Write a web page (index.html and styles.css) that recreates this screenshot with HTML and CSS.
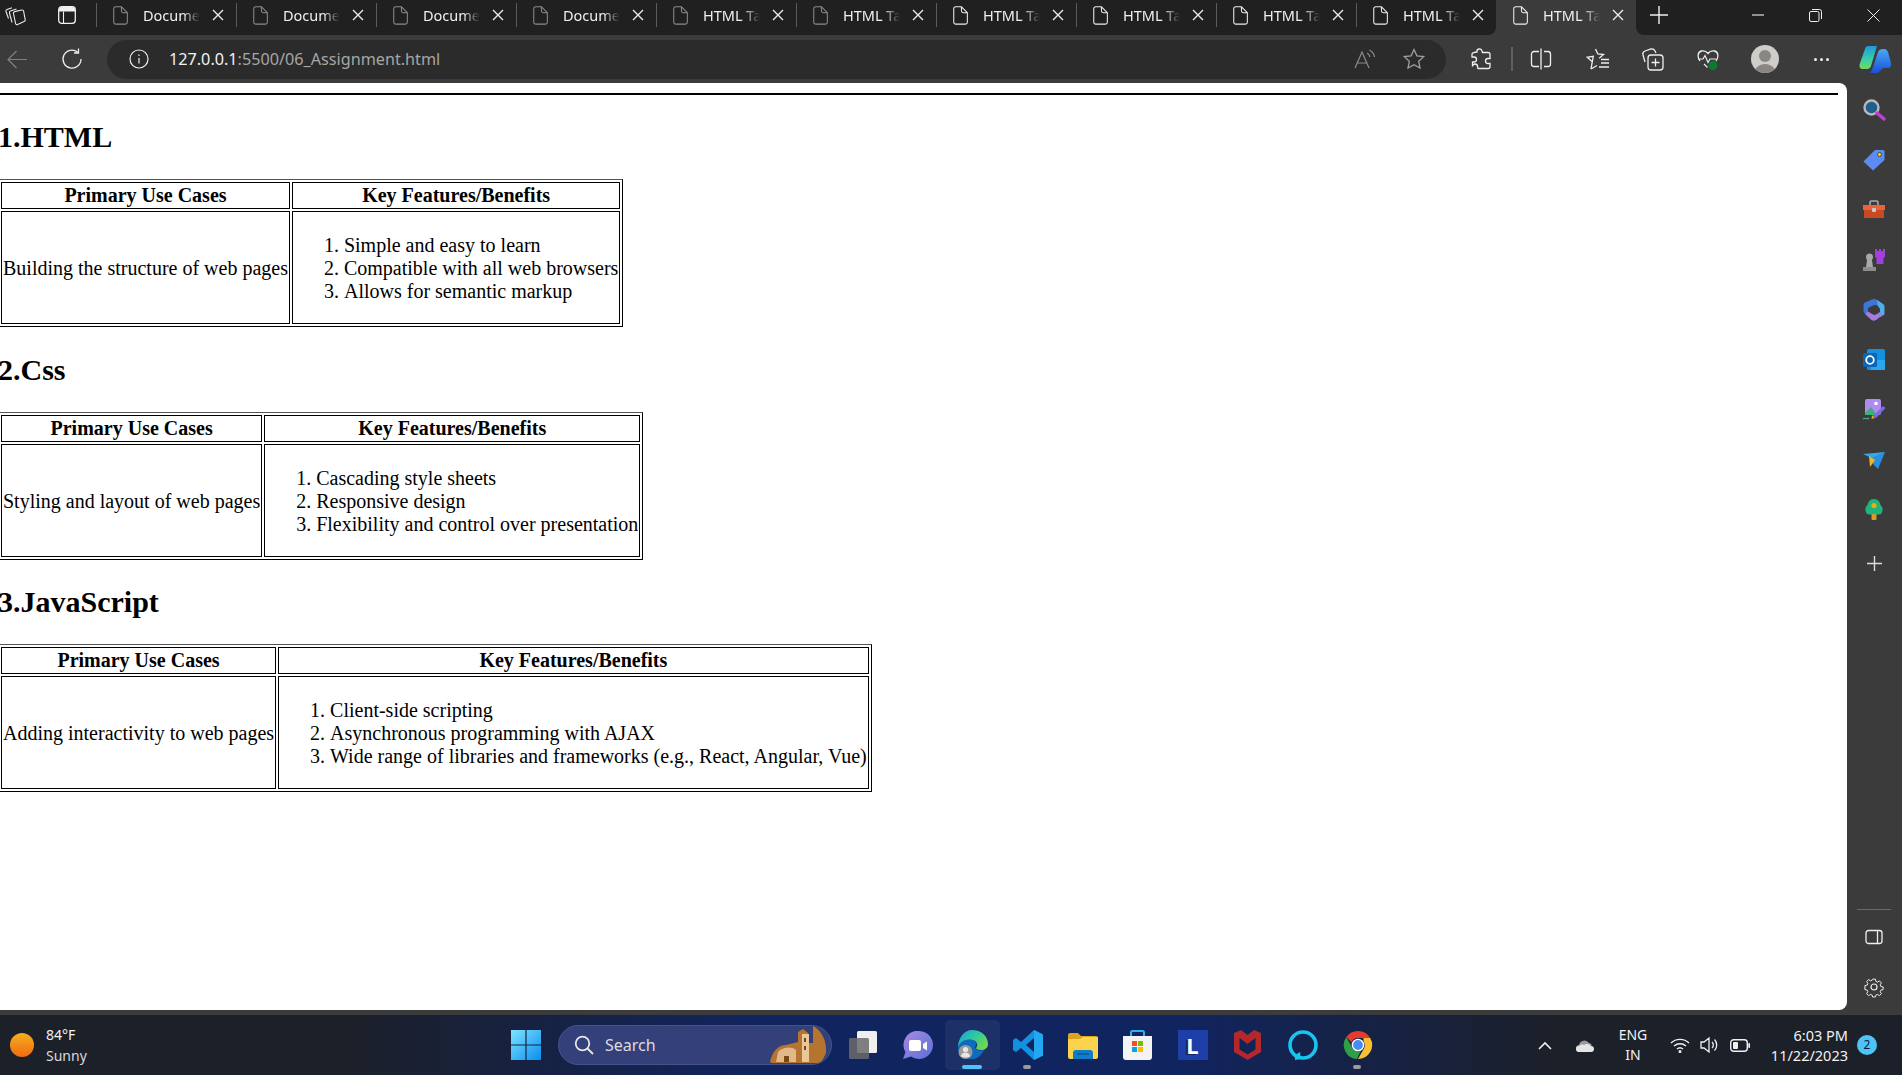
FILE: index.html
```html
<!DOCTYPE html>
<html lang="en">
<head>
<meta charset="utf-8">
<title>06_Assignment</title>
<link rel="stylesheet" href="styles.css">
</head>
<body>
<svg class="defs" width="0" height="0" aria-hidden="true">
  <symbol id="doc" viewBox="0 0 16 20"><path d="M2.800.7h6.200l6.300 6.300v10.200a2 2 0 0 1-2 2H2.800a2 2 0 0 1-2-2V2.700a2 2 0 0 1 2-2zM9 .7v4.300a2 2 0 0 0 2 2h4.300" fill="none" stroke="currentColor" stroke-width="1.100"/></symbol>
  <symbol id="x" viewBox="0 0 12 12"><path d="M1 1l10 10M11 1L1 11" fill="none" stroke="currentColor" stroke-width="1.300"/></symbol>
</svg>
<div class="window">
  <header class="tabstrip">
    <div class="strip-left">
      <div class="strip-tools">
        <svg class="tool-a" width="22" height="22" viewBox="0 0 22 22" fill="none" stroke="#e8e8e8" stroke-width="1.100"><path d="M4.500 14.500L2 7.500c-.3-1 .1-1.700 1-2l5-1.800"/><path d="M8 18.500L5.500 9c-.3-1 .2-1.700 1-2l6-2"/><path d="M9.500 9.500c-.2-1 .3-1.700 1.200-1.900l7-1.600c1-.2 1.700.2 1.900 1.100l1.600 8.500c.2 1-.3 1.600-1.100 1.900l-6.500 3c-1 .4-1.700 0-2-.9z"/></svg>
        <svg class="tool-b" width="18" height="18" viewBox="0 0 18 18"><rect x=".7" y=".7" width="16.600" height="16.600" rx="3" fill="none" stroke="#f0f0f0" stroke-width="1.300"/><path d="M1 4a3 3 0 0 1 3-3h10a3 3 0 0 1 3 3v1.500H1z" fill="#f0f0f0"/><path d="M5.500 5.500V17" stroke="#f0f0f0" stroke-width="1.100"/></svg>
      </div>
      <div class="tab"><svg class="doc"><use href="#doc"/></svg><span class="tab-title">Document</span><svg class="close"><use href="#x"/></svg></div>
      <div class="tab"><svg class="doc"><use href="#doc"/></svg><span class="tab-title">Document</span><svg class="close"><use href="#x"/></svg></div>
      <div class="tab"><svg class="doc"><use href="#doc"/></svg><span class="tab-title">Document</span><svg class="close"><use href="#x"/></svg></div>
      <div class="tab"><svg class="doc"><use href="#doc"/></svg><span class="tab-title">Document</span><svg class="close"><use href="#x"/></svg></div>
      <div class="tab"><svg class="doc"><use href="#doc"/></svg><span class="tab-title">HTML Table</span><svg class="close"><use href="#x"/></svg></div>
      <div class="tab"><svg class="doc"><use href="#doc"/></svg><span class="tab-title">HTML Table</span><svg class="close"><use href="#x"/></svg></div>
      <div class="tab bright"><svg class="doc"><use href="#doc"/></svg><span class="tab-title">HTML Table</span><svg class="close"><use href="#x"/></svg></div>
      <div class="tab bright"><svg class="doc"><use href="#doc"/></svg><span class="tab-title">HTML Table</span><svg class="close"><use href="#x"/></svg></div>
      <div class="tab bright"><svg class="doc"><use href="#doc"/></svg><span class="tab-title">HTML Table</span><svg class="close"><use href="#x"/></svg></div>
      <div class="tab bright"><svg class="doc"><use href="#doc"/></svg><span class="tab-title">HTML Table</span><svg class="close"><use href="#x"/></svg></div>
    </div>
    <div class="tab active bright"><svg class="doc"><use href="#doc"/></svg><span class="tab-title">HTML Table</span><svg class="close"><use href="#x"/></svg></div>
    <div class="strip-right">
      <svg class="newtab" width="18" height="18" viewBox="0 0 18 18"><path d="M9 0v18M0 9h18" stroke="#eee" stroke-width="1.400"/></svg>
      <div class="winctl">
        <svg width="12" height="12" viewBox="0 0 12 12"><path d="M0 6h12" stroke="#eee" stroke-width="1.100"/></svg>
        <svg width="13" height="13" viewBox="0 0 13 13" fill="none" stroke="#eee"><rect x=".5" y="2.500" width="9.500" height="10" rx="1.500"/><path d="M3 .5h7.500a2 2 0 0 1 2 2V10"/></svg>
        <svg width="13" height="13" viewBox="0 0 13 13"><path d="M.5.5l12 12M12.500.5l-12 12" stroke="#eee"/></svg>
      </div>
    </div>
  </header>

  <nav class="toolbar">
    <div class="slot back"><svg width="20" height="19" viewBox="0 0 20 19" fill="none" stroke="#808080" stroke-width="1.200"><path d="M20 9.500H1M9.500 1L1 9.500l8.500 8.500"/></svg></div>
    <div class="slot refresh"><svg width="22" height="22" viewBox="0 0 22 22" fill="none" stroke="#eee" stroke-width="1.300"><path d="M16.500 4A9 9 0 1 0 20 11M17.500 .5V5H13"/></svg></div>
    <div class="address">
      <svg class="info" width="20" height="20" viewBox="0 0 20 20" fill="none" stroke="#eee" stroke-width="1.200"><circle cx="10" cy="10" r="9"/><path d="M10 9v5.500M10 5.500v1.600"/></svg>
      <span class="url"><span class="host">127.0.0.1</span>:5500/06_Assignment.html</span>
      <div class="addr-actions">
        <svg width="22" height="24" viewBox="0 0 22 24" fill="none" stroke="#8a8a8a" stroke-width="1.200"><path d="M1 21L8 5l7 16M3.500 16h9"/><path d="M13 6a6 6 0 0 1 3 4M15.500 3a10 10 0 0 1 5 7"/></svg>
        <svg width="24" height="24" viewBox="0 0 24 24" fill="none" stroke="#a0a0a0" stroke-width="1.300"><path d="M12 2.500l2.900 6.300 6.800.8-5 4.700 1.300 6.800-6-3.400-6 3.400 1.300-6.800-5-4.700 6.800-.8z"/></svg>
      </div>
    </div>
    <div class="slot ext"><svg width="22" height="24" viewBox="0 0 22 24" fill="none" stroke="#eee" stroke-width="1.300"><path d="M7 5a2.500 2.500 0 0 1 5-1l.5 1.500H18a2 2 0 0 1 2 2v4h-2a2.500 2.500 0 0 0 0 5h2v3a2 2 0 0 1-2 2H8l-.5-2a2.500 2.500 0 0 0-5 0V15h1.500a2.500 2.500 0 0 0 0-5H2V7.500a2 2 0 0 1 2-2z"/></svg></div>
    <div class="tool-sep"></div>
    <div class="slot split"><svg width="22" height="24" viewBox="0 0 22 24" fill="none" stroke="#eee" stroke-width="1.300"><path d="M9 4.500H4a2.500 2.500 0 0 0-2.500 2.500v10A2.500 2.500 0 0 0 4 19.500h5M14 4.500h4a2.500 2.500 0 0 1 2.500 2.500v10a2.500 2.500 0 0 1-2.500 2.500h-4M11 1.500v21"/></svg></div>
    <div class="slot"><svg width="24" height="24" viewBox="0 0 24 24" fill="none" stroke="#eee" stroke-width="1.300"><path d="M9.500 2l2.300 5 5.700.6-4.300 3.700M5 22l1.300-7.300-5-4.400 6-1z"/><path d="M5 22l6-3.500M15 12.500h8M15 16h8M13 20h10"/></svg></div>
    <div class="slot"><svg width="24" height="24" viewBox="0 0 24 24" fill="none" stroke="#eee" stroke-width="1.300"><path d="M4 15L2 8c-.5-2 .5-3.500 2-4l6-2c1.500-.3 3 0 4 2l1 2"/><rect x="7" y="8" width="15" height="15" rx="3"/><path d="M14.500 11.500v8M10.500 15.500h8"/></svg></div>
    <div class="slot"><svg width="24" height="24" viewBox="0 0 24 24"><path d="M4 14C1 10 1.500 5 5.500 4c2.500-.6 5 .5 6.500 2.500C13.500 4.500 16 3.400 18.500 4c4 1 4.500 6 1.500 10" fill="none" stroke="#eee" stroke-width="1.300"/><path d="M2 12h5l2-3.500 3 7 2-3.500h6M8 17l3.500 3.500" fill="none" stroke="#eee" stroke-width="1.200"/><circle cx="17" cy="18.500" r="4.500" fill="#0d7a2f"/></svg></div>
    <div class="slot avatar-slot"><div class="avatar"><div class="avatar-head"></div><div class="avatar-body"></div></div></div>
    <div class="slot dots-slot"><span class="dot3"></span><span class="dot3"></span><span class="dot3"></span></div>
    <div class="slot copilot-slot"><svg width="32" height="30" viewBox="0 0 32 30"><defs><linearGradient id="cp1" x1="0" y1="0" x2="0" y2="1"><stop offset="0" stop-color="#1f9ad6"/><stop offset=".6" stop-color="#38d0a8"/><stop offset="1" stop-color="#7ad65a"/></linearGradient><linearGradient id="cp2" x1="0" y1="0" x2="0" y2="1"><stop offset="0" stop-color="#4aa8f5"/><stop offset="1" stop-color="#1b4fd8"/></linearGradient></defs><path d="M9 2h9l-6 20c-.6 2-2 3-4 3H4C1 25 0 23 .7 20L6 5c.5-2 1.500-3 3-3z" fill="url(#cp1)"/><path d="M24 5h1c2 0 3 1 4 3l3 11c.6 3-.6 5-3.500 5H24l-4 4c-1 1-2 1-3 1h-8c2 0 3-1 4-3l6-18c.7-2 2.500-3 5-3z" fill="url(#cp2)"/></svg></div>
  </nav>

  <div class="main">
    <main class="page">
      <hr class="rule">
      <h2 class="heading">1.HTML</h2>
      <table class="info-table" border="1">
        <thead><tr><th>Primary Use Cases</th><th>Key Features/Benefits</th></tr></thead>
        <tbody><tr><td>Building the structure of web pages</td><td><ol class="features"><li>Simple and easy to learn</li><li>Compatible with all web browsers</li><li>Allows for semantic markup</li></ol></td></tr></tbody>
      </table>
      <h2 class="heading">2.Css</h2>
      <table class="info-table" border="1">
        <thead><tr><th>Primary Use Cases</th><th>Key Features/Benefits</th></tr></thead>
        <tbody><tr><td>Styling and layout of web pages</td><td><ol class="features"><li>Cascading style sheets</li><li>Responsive design</li><li>Flexibility and control over presentation</li></ol></td></tr></tbody>
      </table>
      <h2 class="heading">3.JavaScript</h2>
      <table class="info-table" border="1">
        <thead><tr><th>Primary Use Cases</th><th>Key Features/Benefits</th></tr></thead>
        <tbody><tr><td>Adding interactivity to web pages</td><td><ol class="features"><li>Client-side scripting</li><li>Asynchronous programming with AJAX</li><li>Wide range of libraries and frameworks (e.g., React, Angular, Vue)</li></ol></td></tr></tbody>
      </table>
    </main>
    <aside class="sidebar">
      <div class="side-slot"><svg width="24" height="24" viewBox="0 0 24 24"><circle cx="9.500" cy="9.500" r="7" fill="#1f5f8f" stroke="#b8b8b8" stroke-width="2.400"/><path d="M15 15l7 6" stroke="#c23fd0" stroke-width="3.400" stroke-linecap="round"/></svg></div>
      <div class="side-slot"><svg width="24" height="24" viewBox="0 0 24 24"><path d="M13 2h8a1.500 1.500 0 0 1 1.500 1.500V12L11 22.500 1.500 13.500z" fill="#5b8cf5"/><circle cx="17.500" cy="6.500" r="2" fill="#f2d21b" stroke="#333" stroke-width=".8"/></svg></div>
      <div class="side-slot"><svg width="24" height="24" viewBox="0 0 24 24"><path d="M8 7V4.500A1.500 1.500 0 0 1 9.500 3h5A1.500 1.500 0 0 1 16 4.500V7" fill="none" stroke="#aaa" stroke-width="1.600"/><path d="M1 7h22v5H1z" fill="#e8623a"/><path d="M2 12h20v8H2z" fill="#c94a22"/><rect x="10" y="10" width="4" height="4" rx="1" fill="#c8c8c8"/></svg></div>
      <div class="side-slot"><svg width="24" height="24" viewBox="0 0 24 24"><path d="M13 1h2v2h2V1h2v2h2V1h2v8l-1.500 1v6H14.500v-6L13 9V1z" fill="#a33fe0"/><circle cx="7.500" cy="9" r="3.500" fill="#a8a8a8"/><path d="M5 12h5l1 7H4z" fill="#a8a8a8"/><path d="M1 19h13v4H1z" fill="#8c8c8c"/></svg></div>
      <div class="side-slot"><svg width="24" height="24" viewBox="0 0 24 24"><path d="M10 1.500c2-1 3.500-.5 5 .5l6 4-5 2c-2-1.500-4-1.500-6 0L6 10v7l-3-1.500C2 15 1.500 14 1.500 13V7c0-1 .5-2 1.500-2.500z" fill="#3f74d8"/><path d="M15 2l6 4c1 .8 1.500 1.500 1.500 3v6c0 1.500-.5 2-1.500 2.500L18 19v-8l-2-3z" fill="#50b0ec"/><path d="M6 13.500l5 3c1 .5 2 .5 3 0l4-2.500 2 3.500-6 4.500c-1.500 1-3 1-4.500 0L3 16z" fill="#a77ade"/></svg></div>
      <div class="side-slot"><svg width="24" height="24" viewBox="0 0 24 24"><rect x="5" y="1" width="18" height="21" rx="1.500" fill="#1490df"/><path d="M9 12h14v10H9z" fill="#28a8ea"/><rect x="1" y="5" width="14" height="14" rx="1.500" fill="#0a64b8"/><circle cx="8" cy="12" r="3.800" fill="none" stroke="#fff" stroke-width="1.800"/></svg></div>
      <div class="side-slot"><svg width="24" height="24" viewBox="0 0 24 24"><rect x="3" y="1" width="16" height="16" rx="2" fill="#b18af0"/><path d="M3 15l6-6 6 8H3z" fill="#3fae7a"/><circle cx="14" cy="5.500" r="1.800" fill="#fff"/><path d="M11 18L21 8l2.500 2L14 20z" fill="#7a6be0"/><path d="M10 17l3 3-3.500 1z" fill="#e0b020"/><path d="M1 21c2-2 4 1 6-1" fill="none" stroke="#3fae7a" stroke-width="1.200"/></svg></div>
      <div class="side-slot"><svg width="24" height="24" viewBox="0 0 24 24"><path d="M1 6l22-2-9 8z" fill="#35a8ea"/><path d="M9 10l14-6-7 17-5-5z" fill="#2a8fe0"/><path d="M7 8l6 4-5 7z" fill="#f0b429"/></svg></div>
      <div class="side-slot"><svg width="24" height="24" viewBox="0 0 24 24"><path d="M12 1c4 0 6 3 6.500 6C21 9 21.500 13 19 16c-2 1-12 1-14 0C2.500 13 3 9 5.500 7 6 4 8 1 12 1z" fill="#1fb47a"/><rect x="9.500" y="16" width="5" height="6" rx="1" fill="#d99a2b"/><circle cx="12" cy="7.500" r="2.600" fill="#f2a81d"/></svg></div>
      <div class="side-slot side-plus"><svg width="15" height="15" viewBox="0 0 15 15"><path d="M7.500 0v15M0 7.500h15" stroke="#ddd" stroke-width="1.400"/></svg></div>
      <div class="side-bottom">
        <div class="side-div"></div>
        <div class="side-slot"><svg width="20" height="18" viewBox="0 0 20 18" fill="none" stroke="#eee" stroke-width="1.300"><rect x="2" y="2.500" width="16" height="13" rx="2.500"/><path d="M13.500 2.500v13"/></svg></div>
        <div class="side-slot"><svg width="22" height="22" viewBox="0 0 22 22" fill="none" stroke="#eee" stroke-width="1.200"><circle cx="11" cy="11" r="3"/><path d="M9.300 1.500h3.400l.6 2.800 1.900.8 2.400-1.500 2.300 2.400-1.500 2.400.8 1.900 2.800.6v3.200l-2.800.6-.8 1.900 1.500 2.400-2.300 2.400-2.400-1.500-1.900.8-.6 2.300H9.300l-.6-2.300-1.900-.8-2.400 1.500-2.300-2.400 1.500-2.400-.8-1.900-2.800-.6V9.300l2.800-.6.800-1.900-1.500-2.400 2.300-2.400 2.400 1.500 1.900-.8z" transform="translate(1.900 1.900) scale(.83)"/></svg></div>
      </div>
    </aside>
  </div>

  <footer class="taskbar">
    <div class="weather">
      <div class="sun"></div>
      <div class="weather-text"><span class="temp">84°F</span><span class="cond">Sunny</span></div>
    </div>
    <div class="tb-slot start"><svg width="30" height="30" viewBox="0 0 30 30"><defs><linearGradient id="win" x1="0" y1="0" x2="1" y2="1"><stop offset="0" stop-color="#7fe3ff"/><stop offset="1" stop-color="#0a8eef"/></linearGradient></defs><path d="M0 0h14.400v14.400H0zM15.600 0H30v14.400H15.600zM0 15.600h14.400V30H0zM15.600 15.600H30V30H15.600z" fill="url(#win)"/></svg></div>
    <div class="search">
      <svg width="20" height="20" viewBox="0 0 20 20" fill="none" stroke="#e8e8e8" stroke-width="1.800"><circle cx="8.500" cy="8.500" r="6.800"/><path d="M13.500 13.500l5.500 5.500"/></svg>
      <span class="search-text">Search</span>
      <svg class="search-art" width="62" height="38" viewBox="0 0 62 38"><path d="M2 36c2-10 8-17 16-17l12-3V6l5-3 5 4v10l5 0V0c8 4 14 14 13 27-2 5-4 9-8 10H4z" fill="#b5742f"/><path d="M34 8h7v28h-7z" fill="#e8c79a"/><path d="M10 26c4-5 14-6 18-2v12H8z" fill="#e2b88a"/><path d="M16 30h5v6h-5zM36 12h2v4h-2zM36 20h2v4h-2z" fill="#7a4518"/></svg>
    </div>
    <div class="tb-slot"><svg width="32" height="30" viewBox="0 0 32 30"><rect x="10" y="1" width="20" height="22" rx="1.500" fill="#efefef"/><rect x="2" y="8" width="20" height="21" rx="1.500" fill="#6b6b6b" fill-opacity=".85"/></svg></div>
    <div class="tb-slot"><svg width="30" height="29" viewBox="0 0 30 29"><defs><linearGradient id="chat" x1="0" y1="0" x2="1" y2="1"><stop offset="0" stop-color="#a78be0"/><stop offset="1" stop-color="#5b6fd8"/></linearGradient></defs><path d="M16 0a14 14 0 1 1-8 25.500L0 28l2.500-7A14 14 0 0 1 16 0z" fill="url(#chat)"/><rect x="6" y="9" width="12" height="11" rx="2" fill="#fff"/><path d="M20 13l4-2.500v9L20 17z" fill="#fff"/></svg></div>
    <div class="tb-slot edge-active"><svg width="30" height="30" viewBox="0 0 30 30"><defs><linearGradient id="ed" x1="0" y1="0" x2="1" y2=".6"><stop offset="0" stop-color="#1b9de0"/><stop offset=".55" stop-color="#2ec9a0"/><stop offset="1" stop-color="#6fd84e"/></linearGradient></defs><path d="M14 0c9 0 16 6 16 14 0 4-3 6-7 6-3 0-5-1-5-2 2-2 1.500-5-1-7-5-3-14-1-17 7C0 8 6 0 14 0z" fill="url(#ed)"/><path d="M0 18c1-7 9-10 15-8 3 1 4 4 2 7 0 3 5 4 9 3-3 6-8 10-14 9C5 28 0 24 0 18z" fill="#0f6cbd"/><circle cx="7.500" cy="22" r="7" fill="#9a9a9a"/><circle cx="7.500" cy="19.500" r="2.600" fill="#e6e6e6"/><path d="M2.800 26c1-2.500 2.500-3.500 4.700-3.500s3.700 1 4.700 3.500c-2 2-7.400 2-9.400 0z" fill="#e6e6e6"/></svg><span class="run-bar"></span></div>
    <div class="tb-slot"><svg width="30" height="30" viewBox="0 0 30 30"><path fill-rule="evenodd" d="M21 0l9 4.500v21L21 30 8 18l-5 4-3-2v-10l3-2 5 4zM21 8l-8 7 8 7z" fill="#1490e0"/><path d="M21 0l9 4.500v21L21 30z" fill="#22a7f0"/></svg><span class="run-dot"></span></div>
    <div class="tb-slot"><svg width="30" height="27" viewBox="0 0 30 27"><path d="M0 3a2 2 0 0 1 2-2h8l3 3h15a2 2 0 0 1 2 2v3H0z" fill="#d9a520"/><path d="M0 7h12l3-2h15v20a2 2 0 0 1-2 2H2a2 2 0 0 1-2-2z" fill="#fbd34d"/><path d="M5 27v-6a3 3 0 0 1 3-3h14a3 3 0 0 1 3 3v6z" fill="#0f7dc9"/><path d="M9 22h12" stroke="#0a4f8a" stroke-width="1.200"/></svg></div>
    <div class="tb-slot"><svg width="29" height="30" viewBox="0 0 29 30"><path d="M8 6V2.500A1.500 1.500 0 0 1 9.500 1h10A1.500 1.500 0 0 1 21 2.500V6" fill="none" stroke="#2db3f0" stroke-width="2"/><path d="M0 6h29v21a3 3 0 0 1-3 3H3a3 3 0 0 1-3-3z" fill="#f3f3f3"/><path d="M9 11h5v5H9z" fill="#f25022"/><path d="M15 11h5v5h-5z" fill="#7fba00"/><path d="M9 17h5v5H9z" fill="#00a4ef"/><path d="M15 17h5v5h-5z" fill="#ffb900"/></svg></div>
    <div class="tb-slot"><div class="l-logo">L</div></div>
    <div class="tb-slot"><svg width="27" height="30" viewBox="0 0 27 30"><path d="M0 3l7-3 6.500 5L20 0l7 3v19l-13.500 8L0 22zM5.500 8v11.500l8 5 8-5V8l-8 6z" fill="#b3282a" fill-rule="evenodd"/></svg></div>
    <div class="tb-slot"><svg width="30" height="30" viewBox="0 0 30 30"><circle cx="15" cy="15" r="13" fill="none" stroke="#17c5ee" stroke-width="3.600"/><path d="M7 25l5-3 1 7-6 1z" fill="#17c5ee"/></svg></div>
    <div class="tb-slot"><svg width="30" height="30" viewBox="0 0 32 32"><path d="M16 1a15 15 0 0 1 13 7.500H16a7.500 7.500 0 0 0-7 4.500L3.500 7.500A15 15 0 0 1 16 1z" fill="#e33b2e"/><path d="M29 8.500A15 15 0 0 1 16 31l6.500-11.500A7.500 7.500 0 0 0 22 12l-.2-3.500z" fill="#fbc02d"/><path d="M3.500 7.500L9.800 19a7.500 7.500 0 0 0 9 3.500L15 31A15 15 0 0 1 3.500 7.500z" fill="#2f9e44"/><circle cx="16" cy="16" r="6" fill="#4a8af4" stroke="#fff" stroke-width="1.500"/></svg><span class="run-dot"></span></div>
    <div class="tray">
      <div class="tray-slot"><svg width="14" height="9" viewBox="0 0 14 9" fill="none" stroke="#f0f0f0" stroke-width="1.600"><path d="M1 8l6-6 6 6"/></svg></div>
      <div class="tray-slot"><svg width="20" height="13" viewBox="0 0 20 13"><path d="M5 13a3.500 3.500 0 0 1-1-7 5.500 5.500 0 0 1 10-2 4.500 4.500 0 0 1 3 2z" fill="#9a9a9a"/><path d="M4 13a3 3 0 0 1 0-6c1-1 3-2 5-1 2-1.500 5-1.500 7 1a3 3 0 0 1 0 6z" fill="#e6e6e6"/></svg></div>
      <div class="lang"><span>ENG</span><span>IN</span></div>
      <div class="tray-slot narrow"><svg width="20" height="15" viewBox="0 0 20 15" fill="none" stroke="#f0f0f0" stroke-width="1.400"><path d="M1 5a13 13 0 0 1 18 0M4 8a9 9 0 0 1 12 0M7 11a4.500 4.500 0 0 1 6 0"/><circle cx="10" cy="13.500" r=".8" fill="#f0f0f0"/></svg></div>
      <div class="tray-slot narrow"><svg width="20" height="18" viewBox="0 0 20 18" fill="none" stroke="#f0f0f0" stroke-width="1.300"><path d="M1 6h3L9 2v14l-5-4H1zM12 6a4 4 0 0 1 0 6M14.500 3.500a8 8 0 0 1 0 11"/></svg></div>
      <div class="tray-slot narrow"><svg width="20" height="13" viewBox="0 0 20 13"><rect x=".7" y=".7" width="16.600" height="11.600" rx="3" fill="none" stroke="#f0f0f0" stroke-width="1.400"/><rect x="3" y="3" width="5" height="7" rx="1" fill="#f0f0f0"/><rect x="18.300" y="4" width="1.700" height="5" rx=".8" fill="#f0f0f0"/></svg></div>
      <div class="clock"><span>6:03 PM</span><span>11/22/2023</span></div>
      <div class="badge">2</div>
    </div>
  </footer>
</div>
</body>
</html>
```

FILE: styles.css
```css
* { box-sizing: border-box; }
html, body { margin: 0; padding: 0; }
body { width: 1902px; height: 1075px; overflow: hidden; background: #3b3b3b; }
.defs { position: absolute; }
svg { display: block; flex: none; }

.window { display: flex; flex-direction: column; width: 1902px; height: 1075px; font-family: "Noto Sans", "Open Sans", sans-serif; }

/* tab strip */
.tabstrip { display: flex; height: 35px; flex: none; background: #3b3b3b; color: #f0f0f0; font-size: 14.5px; }
.strip-left { display: flex; padding-bottom: 5px; background: #202020; border-bottom-right-radius: 8px; width: 1496px; }
.strip-right { display: flex; flex: 1; align-items: center; padding-bottom: 5px; background: #202020; border-bottom-left-radius: 8px; }
.strip-tools { display: flex; align-items: center; width: 96px; padding-left: 4px; }
.tool-b { margin-left: 32px; }
.tab { position: relative; display: flex; align-items: center; width: 140px; padding-left: 17px; }
.tab.active { padding-bottom: 5px; }
.tab::before { content: ""; position: absolute; left: 0; top: 3px; bottom: 3px; width: 1px; background: #5c5c5c; }
.tab.active::before { display: none; }
.doc { width: 15px; height: 19px; color: #8a8a8a; }
.bright .doc { color: #f0f0f0; }
.tab-title { width: 57px; margin-left: 15px; white-space: nowrap; overflow: hidden; -webkit-mask-image: linear-gradient(to right, #000 70%, transparent 100%); mask-image: linear-gradient(to right, #000 70%, transparent 100%); }
.close { width: 12px; height: 12px; margin-left: 12px; color: #f0f0f0; }
.newtab { margin-left: 14px; }
.winctl { display: flex; align-items: center; margin-left: 84px; gap: 45px; }

/* toolbar */
.toolbar { display: flex; align-items: center; height: 48px; flex: none; background: #3b3b3b; }
.slot { display: flex; align-items: center; justify-content: center; width: 55px; height: 40px; flex: none; }
.back { width: 34px; }
.refresh { width: 32px; margin-left: 22px; }
.address { display: flex; align-items: center; width: 1339px; height: 39px; margin-left: 19px; margin-right: 10px; padding: 0 7px 0 22px; border-radius: 20px; background: #2b2b2b; flex: none; }
.info { margin-right: 20px; }
.url { font-size: 16.2px; color: #a6a6a6; white-space: nowrap; }
.host { color: #f2f2f2; }
.addr-actions { display: flex; align-items: center; margin-left: auto; gap: 26px; padding-right: 13px; }
.ext { width: 50px; }
.tool-sep { width: 2px; height: 24px; margin: 0 5px; background: #5f5f5f; flex: none; }
.split { width: 46px; margin-right: 6px; }
.avatar-slot { margin-left: 2px; width: 56px; }
.avatar { position: relative; width: 28px; height: 28px; border-radius: 50%; overflow: hidden; background: #cfcdc8; }
.avatar-head { width: 12px; height: 12px; margin: 5px auto 0; border-radius: 50%; background: #8a8783; }
.avatar-body { width: 24px; height: 14px; margin: 2px auto 0; border-radius: 12px 12px 0 0; background: #8a8783; }
.dots-slot { width: 57px; gap: 3px; }
.dot3 { width: 3px; height: 3px; border-radius: 50%; background: #eee; }
.copilot-slot { width: 50px; }

/* main */
.main { display: flex; flex: 1; min-height: 0; }
.page { width: 1847px; margin-bottom: 5px; padding-right: 9px; background: #fff; color: #000; border-radius: 0 8px 8px 0; font-family: "Liberation Serif", "Times New Roman", serif; font-size: 20px; overflow: hidden; }
.rule { height: 2px; margin: 10px 0 0; border: 0; background: #000; }
.heading { margin: 25.2px 0 25.2px -2px; font-size: 30px; font-weight: bold; line-height: 34px; }
.info-table { margin-left: -2px; border-color: #000; border-spacing: 2px; border-collapse: separate; line-height: 23px; }
.info-table th, .info-table td { padding: 1px; border: 1px solid #000; }
.info-table td { padding: 2px 1px 0; }
.features { margin: 20px 0; padding-left: 50px; }

/* sidebar */
.sidebar { display: flex; flex-direction: column; flex: 1; padding: 2px 1px 3px 0; }
.side-slot { display: flex; align-items: center; justify-content: center; height: 50px; flex: none; }
.side-plus { margin-top: 3px; }
.side-bottom { margin-top: auto; }
.side-div { height: 1px; margin: 0 10px 2px; background: #6a6a6a; }

/* taskbar */
.taskbar { display: flex; align-items: center; height: 60px; flex: none; color: #f2f2f2; background: linear-gradient(to right, #1c2029 0%, #1c2029 18%, #10245f 40%, #10245f 62%, #1c2029 82%, #1c2029 100%); }
.weather { display: flex; align-items: center; width: 498px; padding-left: 10px; flex: none; }
.sun { width: 24px; height: 24px; border-radius: 50%; background: linear-gradient(to bottom, #f2b01f, #f26a10); }
.weather-text { display: flex; flex-direction: column; margin-left: 12px; font-size: 14px; line-height: 21px; }
.cond { color: #d8d8d8; }
.tb-slot { position: relative; display: flex; align-items: center; justify-content: center; width: 55px; height: 50px; flex: none; }
.search { position: relative; display: flex; align-items: center; width: 274px; height: 40px; margin: 0 3px 0 5px; padding-left: 15px; flex: none; border-radius: 20px; background: #34407a; border: 1px solid #46538a; }
.search-text { margin-left: 11px; font-size: 16px; color: #dcdcdc; }
.search-art { position: absolute; right: 1px; bottom: 0; }
.edge-active { border-radius: 5px; background: rgba(255, 255, 255, .06); }
.run-bar { position: absolute; bottom: 1px; left: 17px; width: 20px; height: 4px; border-radius: 2px; background: #4fc3f7; }
.run-dot { position: absolute; bottom: 1px; left: 23px; width: 8px; height: 4px; border-radius: 2px; background: #9a9a9a; }
.l-logo { width: 30px; height: 30px; background: #1e3fa8; color: #fff; font: bold 22px/30px "Noto Sans", sans-serif; text-align: center; text-shadow: -2px 1px 0 #12245f; }
.tray { display: flex; align-items: center; margin-left: auto; padding-right: 25px; }
.tray-slot { display: flex; align-items: center; justify-content: center; width: 40px; height: 40px; }
.tray-slot.narrow { width: 30px; }
.lang { display: flex; flex-direction: column; align-items: center; width: 56px; margin-right: 4px; font-size: 14px; line-height: 20px; }
.clock { display: flex; flex-direction: column; align-items: flex-end; width: 93px; font-size: 14.5px; line-height: 20px; }
.badge { width: 20px; height: 20px; margin-left: 9px; border-radius: 50%; background: #4fc3f7; color: #10203a; font-size: 12px; line-height: 20px; text-align: center; }
```
